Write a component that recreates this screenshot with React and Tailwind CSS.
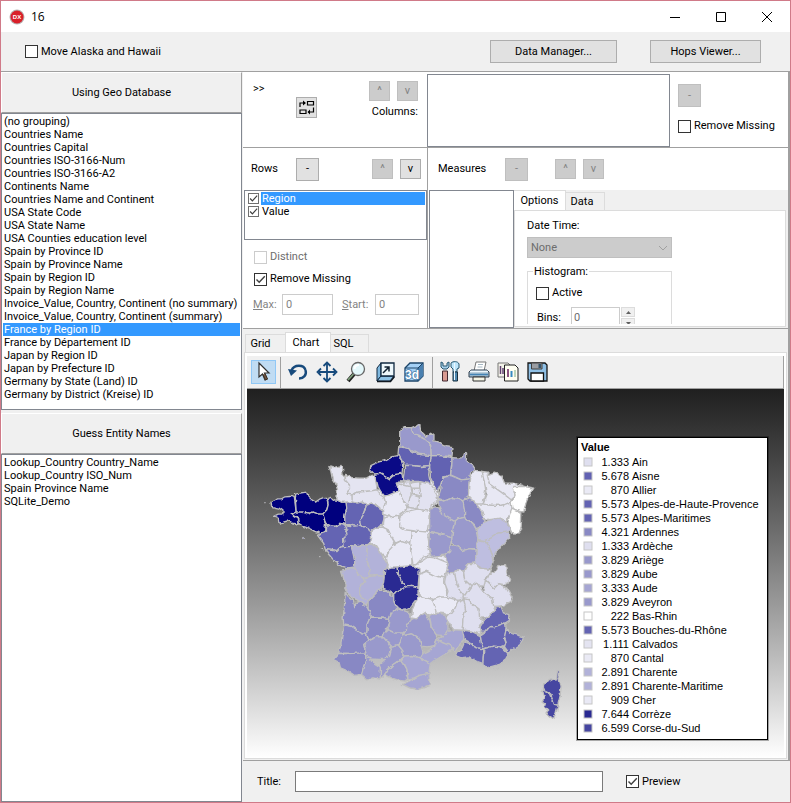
import React from "react";

const DATABASES = [
  "(no grouping)", "Countries Name", "Countries Capital", "Countries ISO-3166-Num", "Countries ISO-3166-A2",
  "Continents Name", "Countries Name and Continent", "USA State Code", "USA State Name",
  "USA Counties education level", "Spain by Province ID", "Spain by Province Name", "Spain by Region ID",
  "Spain by Region Name", "Invoice_Value, Country, Continent (no summary)",
  "Invoice_Value, Country, Continent (summary)", "France by Region ID", "France by Département ID",
  "Japan by Region ID", "Japan by Prefecture ID", "Germany by State (Land) ID", "Germany by District (Kreise) ID",
];
const ENTITIES = ["Lookup_Country Country_Name", "Lookup_Country ISO_Num", "Spain Province Name", "SQLite_Demo"];

const LEGEND = [
  ["#dfdfef", "1.333", "Ain"], ["#6161b2", "5.678", "Aisne"], ["#eaeaf5", "870", "Allier"],
  ["#6464b3", "5.573", "Alpes-de-Haute-Provence"], ["#6464b3", "5.573", "Alpes-Maritimes"],
  ["#8989c4", "4.321", "Ardennes"], ["#dfdfef", "1.333", "Ardèche"], ["#9999cc", "3.829", "Ariège"],
  ["#9999cc", "3.829", "Aube"], ["#a6a6d3", "3.333", "Aude"], ["#9999cc", "3.829", "Aveyron"],
  ["#ffffff", "222", "Bas-Rhin"], ["#6464b3", "5.573", "Bouches-du-Rhône"], ["#e4e4f1", "1.111", "Calvados"],
  ["#eaeaf5", "870", "Cantal"], ["#b2b2d9", "2.891", "Charente"], ["#b2b2d9", "2.891", "Charente-Maritime"],
  ["#e9e9f5", "909", "Cher"], ["#2a2a92", "7.644", "Corrèze"], ["#4646a1", "6.599", "Corse-du-Sud"],
];

// Departments, three units to a pixel, grouped by the corner of the country they are measured from.
const NORTH_WEST = [
  ["#00007e", [
    "48,262 60,258 68,252 80,252 90,246 105,245 118,248 120,262 124,292 112,297 116,302 126,308 130,328 115,325 100,318 85,322 72,325 70,312 56,305 70,298 84,298 84,288 72,280 60,278 50,275",
    "122,238 140,234 155,232 160,245 172,256 182,262 196,252 208,248 216,255 220,270 216,285 204,298 190,298 175,292 160,298 140,292 124,292 122,262",
    "112,297 124,292 140,292 160,298 175,292 190,298 204,298 208,310 212,330 208,352 195,355 180,350 165,342 145,335 130,325 128,308",
    "218,252 228,248 240,256 246,255 262,262 274,262 276,280 270,300 270,330 255,326 240,335 225,332 212,328 208,310 204,298 216,285 220,270"]],
  ["#e4e4f1", [
    "222,155 236,160 244,156 262,152 264,170 260,178 270,185 272,196 284,210 284,222 276,230 278,238 292,240 294,262 274,262 260,262 246,255 248,225 242,205 232,190 228,170",
    "272,182 290,188 310,190 335,190 348,182 360,180 362,195 366,215 366,225 350,228 330,230 310,232 292,240 278,238 276,230 284,222 284,210 272,196",
    "292,240 310,232 330,230 350,228 366,225 376,240 388,248 392,260 388,275 386,290 372,280 358,268 350,265 335,272 322,262 308,265 292,262"]],
  ["#0a0a86", [
    "346,165 348,152 370,142 395,135 415,125 428,122 440,135 444,155 442,175 430,178 415,180 402,192 390,185 375,176 360,178",
    "360,178 375,176 390,185 402,192 415,180 442,176 444,192 436,200 434,212 428,230 410,238 390,244 378,230 370,215 366,200"]],
  ["#6464b3", [
    "274,262 292,262 308,265 322,262 335,272 330,285 325,302 315,318 318,332 300,334 285,330 270,330 270,300 276,280",
    "335,272 350,265 358,268 372,280 386,290 388,312 382,330 366,338 350,348 335,340 318,332 315,318 325,302 330,285",
    "188,362 200,354 212,350 212,330 225,332 240,335 255,326 270,330 276,340 270,350 280,358 266,372 268,396 256,398 246,408 230,404 212,402 206,385 198,375",
    "270,330 300,334 318,332 335,340 350,348 350,365 345,385 338,390 310,392 290,396 268,396 266,372 280,358 270,350 276,340",
    "210,402 230,404 246,408 256,398 268,396 290,396 297,420 300,440 299,457 280,460 260,455 240,440 220,417"]],
  ["#e9e9f5", [
    "390,244 410,238 428,230 434,212 440,225 455,245 460,265 455,285 435,300 410,305 388,300 386,285 392,262 388,248",
    "388,310 410,305 435,302 445,325 470,340 480,360 475,380 465,385 440,378 422,385 410,365 400,345 385,338",
    "350,348 366,338 385,338 400,345 412,370 420,385 415,400 400,410 395,430 378,415 365,395 345,385",
    "420,388 440,378 465,385 470,410 472,440 470,455 440,460 400,462 395,430 402,408"]],
];
const NORTH_EAST = [
  ["#e9e9f5", [
    "15,305 38,290 70,282 105,290 102,320 98,350 75,352 55,348 30,345 15,335",
    "50,350 75,350 98,352 102,380 108,420 85,425 70,445 55,450 50,420 45,385"]],
  ["#e2e2f0", [
    "5,205 40,200 75,200 108,208 120,225 130,255 110,270 105,290 70,282 38,278 18,240",
    "5,205 45,215 50,235 38,278 18,240",
    "50,235 75,245 70,282 38,278",
    "50,220 75,220 80,245 50,235",
    "45,205 75,200 75,220 50,220"]],
  ["#6262b2", [
    "12,95 40,100 70,118 110,122 105,152 80,155 50,152 30,152 22,138 10,118",
    "30,152 50,152 80,155 105,152 102,180 108,208 75,200 40,200 25,195 28,175",
    "110,122 140,122 172,128 172,145 168,180 145,188 138,210 130,230 118,210 108,190 105,155"]],
  ["#9999cc", [
    "15,45 30,38 50,38 55,55 75,65 95,75 108,90 110,122 70,118 40,100 15,92",
    "50,38 75,28 78,48 95,65 108,55 118,62 118,78 140,85 155,95 175,98 172,125 140,122 110,122 108,90 95,75 75,65 55,55",
    "130,256 150,258 175,248 190,250 205,258 210,280 210,308 190,312 180,320 165,312 145,300 135,280",
    "105,280 130,275 145,300 165,312 180,320 175,345 172,370 140,358 105,350 105,310",
    "105,350 140,358 172,370 168,392 165,420 140,422 108,425 102,390",
    "180,320 190,312 210,308 235,325 245,345 250,375 245,402 225,402 205,408 185,395 170,385 172,370 175,345",
    "150,420 165,408 168,392 185,395 205,408 225,402 245,405 243,445 220,447 205,470 190,465 178,475 155,475 160,445"]],
  ["#8989c4", [
    "172,128 195,130 205,128 212,110 216,115 215,140 235,152 240,160 228,172 225,192 200,195 180,185 168,180 172,145",
    "145,188 168,182 200,195 225,192 222,225 222,245 205,258 190,250 175,248 150,258 130,250 138,225 140,210",
    "205,258 222,250 240,262 258,275 262,300 272,318 262,335 245,342 235,325 210,308 210,285"]],
  ["#bebee0", [
    "248,345 265,325 285,315 315,310 335,322 350,345 340,352 310,355 290,370 270,378 250,375",
    "270,378 290,370 310,355 345,352 345,368 325,390 305,415 298,432 285,400",
    "250,376 270,378 285,400 298,432 292,455 270,465 243,450 245,405"]],
  ["#e8e8f4", [
    "240,165 262,170 270,185 275,215 270,245 265,268 245,268 222,245 222,225 225,190",
    "262,170 280,172 285,208 310,220 345,245 352,262 320,272 290,272 265,268 275,240 272,215",
    "278,180 300,172 322,185 330,205 355,205 385,212 375,225 358,218 362,245 350,255 320,232 285,208",
    "245,268 265,268 290,272 320,272 352,262 355,280 345,300 335,322 315,310 285,315 268,310 262,290"]],
  ["#ffffff", [
    "355,215 390,215 418,220 405,240 395,262 388,292 370,288 352,280 350,262 362,245",
    "352,280 370,288 382,295 380,340 372,358 355,358 340,325 345,300"]],
];
const SOUTH_WEST = [
  ["#b2b2d9", [
    "95,-9 120,-13 143,-15 140,30 150,60 150,80 130,85 115,75 104,54 105,35",
    "143,-15 155,-17 170,-5 183,10 205,48 195,60 192,80 170,78 150,80 150,60 140,30",
    "62,65 75,62 80,55 104,54 115,75 130,85 135,95 120,115 120,135 135,150 145,155 138,168 120,155 100,145 85,130 75,110 78,95 68,85",
    "130,85 150,80 170,78 192,80 190,105 178,122 160,140 145,155 135,150 120,135 120,115 135,95"]],
  ["#8888c4", [
    "76,128 85,140 100,152 106,175 108,158 120,155 138,168 145,178 152,190 150,208 142,225 142,240 140,255 125,252 110,240 95,230 72,228 70,205 74,170",
    "145,155 160,140 178,122 195,122 215,135 225,145 228,165 232,178 215,192 208,210 190,206 170,205 150,206 152,190 145,178",
    "72,226 95,230 110,240 125,252 140,255 148,272 132,285 138,310 110,314 80,312 56,312 64,280 68,250",
    "142,225 150,206 190,206 208,210 205,228 195,248 190,262 170,262 148,272 140,255 142,240",
    "40,330 56,312 80,312 138,310 138,335 132,350 125,375 105,378 85,365 62,355 58,340 50,335"]],
  ["#9999cc", [
    "138,310 145,325 155,330 165,345 182,355 182,388 160,385 140,388 125,375 132,350 138,335",
    "132,285 148,272 170,262 190,262 205,280 215,300 210,320 195,330 175,330 155,328 145,325 138,310",
    "210,320 215,300 212,290 235,285 250,305 250,320 235,335 220,345 205,360 195,375 182,388 182,355 178,345 195,330",
    "195,248 205,240 225,250 250,248 248,265 235,285 215,290 205,278 190,262",
    "208,210 215,192 232,178 250,182 272,190 275,210 262,228 260,240 250,250 225,250 205,240 205,228",
    "248,258 275,252 300,270 305,290 310,308 300,325 275,318 250,320 250,305 235,285 240,275",
    "195,375 205,360 220,345 235,335 248,335 262,360 260,380 265,388 255,395 235,392 215,385",
    "260,240 262,228 275,210 295,200 318,190 330,210 335,235 350,255 352,270 345,288 325,292 305,290 300,270 275,252 250,258"]],
  ["#a6a6d3", [
    "330,200 350,190 375,195 385,215 385,245 370,258 350,255 335,235",
    "352,270 370,258 385,245 410,240 430,240 435,260 430,275 415,290 405,310 395,290 370,280",
    "300,325 310,312 325,305 345,290 352,270 370,280 395,290 398,298 375,315 350,330 335,342 320,335",
    "250,320 275,318 300,325 320,335 332,342 328,372 300,378 285,385 265,388 262,360 255,345 246,335",
    "248,405 268,395 285,385 300,378 328,372 332,408 310,415 295,420 270,415"]],
  ["#eaeaf5", [
    "280,48 305,35 325,22 350,25 385,40 382,60 375,85 345,78 320,65 298,72",
    "298,75 320,65 345,78 375,85 380,110 382,142 360,145 340,150 320,145 295,138 298,105",
    "275,205 278,180 295,140 320,145 340,150 348,175 350,190 330,200 318,188 300,200 290,208",
    "340,150 365,142 410,145 418,160 400,180 385,200 375,192 350,190 345,170"]],
  ["#2a2a92", [
    "195,60 215,52 232,52 235,70 245,95 258,112 240,122 222,132 205,122 188,115 192,95",
    "232,52 275,48 298,60 298,80 295,112 275,110 258,112 245,95 235,70",
    "222,132 240,122 258,112 275,110 295,115 295,140 285,155 270,175 252,182 230,172 222,155"]],
];
const SOUTH_EAST = [
  ["#dfdfef", [
    "50,70 75,68 80,95 88,118 105,138 103,148 85,152 50,142 55,125 45,100",
    "75,68 85,60 102,65 105,90 125,108 105,138 88,118 80,95",
    "102,65 115,42 138,42 150,55 185,60 182,72 168,85 168,112 150,112 140,98 125,108 105,90",
    "182,75 195,68 205,48 228,45 232,70 242,95 225,105 208,102 195,115 170,90",
    "168,90 195,115 208,102 232,115 248,145 245,155 220,168 192,172 188,145 160,125 165,105",
    "105,138 125,108 140,98 160,125 188,145 192,172 198,185 170,205 150,205 148,178 130,165 118,150 103,148",
    "50,205 75,175 85,155 103,148 108,180 100,210 98,242 72,240",
    "103,148 118,150 130,165 148,178 150,205 160,212 148,235 155,255 125,245 98,242 100,210 108,180"]],
  ["#6464b3", [
    "150,235 165,210 198,185 195,170 215,172 222,190 238,195 240,212 228,220 195,232 180,230 170,245 155,245",
    "152,258 170,245 180,232 195,232 228,220 230,240 225,265 232,285 215,292 190,290 163,298 155,280",
    "230,238 245,252 282,262 272,285 250,300 240,312 225,292 230,275 225,262",
    "98,242 125,245 152,258 155,280 163,298 140,295 120,282 105,275",
    "75,318 98,295 105,277 120,282 140,295 163,298 160,342 140,335 118,322 95,325",
    "163,298 190,290 215,292 235,312 230,330 210,345 170,355 160,342"]],
  ["#4646a1", [
    "342,405 370,390 382,388 384,362 390,365 388,385 395,410 392,440 385,468 375,465 365,435 342,420",
    "338,425 360,430 375,465 386,468 380,490 372,508 350,492 358,485 345,472 348,462 338,455 345,442"]],
];

function Shapes({ regions, transform }) {
  return (
    <g transform={transform}>
      {regions.map(([fill, shapes], i) => (
        <g key={i} fill={fill}>{shapes.map((p) => <polygon key={p} points={p} />)}</g>
      ))}
    </g>
  );
}

function FranceMap() {
  return (
    <svg viewBox="0 0 538 369" className="block w-full" role="img" aria-label="France by region">
      <defs>
        <filter id="coast" x="0" y="0" width="100%" height="100%" colorInterpolationFilters="sRGB">
          <feTurbulence type="fractalNoise" baseFrequency="0.18" numOctaves="2" seed="4" result="n" />
          <feDisplacementMap in="SourceGraphic" in2="n" scale="4" xChannelSelector="R" yChannelSelector="G" />
        </filter>
      </defs>
      <g filter="url(#coast)">
        <g transform="translate(8 26) scale(0.333333)" stroke="#bebebe" strokeWidth="4" strokeLinejoin="round">
          <polygon fill="#e9e9f5" points="366,225 430,225 440,200 530,195 560,250 530,280 530,420 590,430 590,480 640,560 580,590 480,560 480,500 470,455 400,460 350,390 350,345 388,330" />
          <Shapes regions={NORTH_WEST} />
          <Shapes regions={NORTH_EAST} transform="translate(420 0)" />
          <Shapes regions={SOUTH_WEST} transform="translate(195 405)" />
          <Shapes regions={SOUTH_EAST} transform="translate(525 405)" />
          <g fill="#6464b3" strokeWidth="3">
            <circle cx="30" cy="267" r="1" /><circle cx="146" cy="370" r="3" />
            <path d="M193,426h7M198,402l8,4M257,472l8,4M268,490l5,14M715,762l8,4M728,765l6,-4" />
          </g>
        </g>
      </g>
    </svg>
  );
}

function Check({ label, checked = false, disabled = false, small = false, tone = "text-black" }) {
  return (
    <label className={"flex items-center gap-[3px] whitespace-nowrap " + tone}>
      <span className="grid shrink-0">
        <input
          type="checkbox"
          defaultChecked={checked}
          disabled={disabled}
          className={"peer col-start-1 row-start-1 m-0 appearance-none border bg-white " +
            (small ? "size-[11px] border-[#707070]" : disabled ? "size-[13px] border-[#cccccc]" : "size-[13px] border-[#333333]")}
        />
        <svg viewBox="0 0 13 13" className={"pointer-events-none invisible col-start-1 row-start-1 peer-checked:visible " + (small ? "size-[11px]" : "size-[13px]")} fill="none" stroke="#404040" strokeWidth="1.4">
          <path d="M2.5 6.5L5.2 9.3L10.8 3.2" />
        </svg>
      </span>
      {label}
    </label>
  );
}

function Btn({ children, disabled = false, className = "", label }) {
  return (
    <button
      type="button"
      disabled={disabled}
      aria-label={label}
      className={"grid shrink-0 place-items-center border " +
        (disabled ? "border-[#bfbfbf] bg-[#cccccc] text-[#838383] " : "border-[#adadad] bg-[#e1e1e1] text-black ") + className}
    >
      {children}
    </button>
  );
}

function PanelButton({ children }) {
  return (
    <button type="button" className="h-[41px] shrink-0 border border-t-white border-l-white border-r-[#a0a0a0] border-b-[#a0a0a0] bg-[#f0f0f0] text-center">
      {children}
    </button>
  );
}

function List({ items, selected, className }) {
  return (
    <ul className={"border border-[#828790] bg-white p-px leading-[13px] whitespace-nowrap " + className}>
      {items.map((t) => (
        <li key={t} className={t === selected ? "bg-[#3399ff] px-px text-white" : "px-px"}>{t}</li>
      ))}
    </ul>
  );
}

function Tool({ label, active = false, children }) {
  return (
    <button type="button" aria-label={label} className={"grid h-6 w-[25px] shrink-0 place-items-center border " + (active ? "border-[#90c8f6] bg-[#c0dcf3]" : "border-transparent")}>
      <svg viewBox="0 0 22 22" className="size-[22px]" fill="none">{children}</svg>
    </button>
  );
}

function Toolbar() {
  return (
    <div className="flex h-[33px] shrink-0 items-center gap-1 border-r border-b border-[#a0a0a0] bg-[#f0f0f0] pl-1">
      <Tool label="Select" active>
        <path d="M6 2L6 16L9.5 13L12 19L14 18L11.5 12H16Z" fill="#fff" stroke="#303030" strokeWidth="1.2" />
        <path d="M10 13.5L12.5 19L14.5 18L12 12.5" fill="#705848" stroke="#403020" />
      </Tool>
      <span className="h-[31px] w-px bg-[#a0a0a0]" />
      <Tool label="Rotate">
        <path d="M4.5 9.5C7 3 17 3.500 18.500 9C20 14 16.500 17.500 12 17.500" stroke="#174a7c" strokeWidth="2.4" />
        <path d="M1 8L10 9.500L4 15Z" fill="#174a7c" />
      </Tool>
      <Tool label="Move">
        <path d="M11 3V19M3 11H19" stroke="#174a7c" strokeWidth="1.8" />
        <path d="M7.500 5L11 1.500L14.500 5M7.500 17L11 20.500L14.500 17M5 7.500L1.500 11L5 14.500M17 7.500L20.500 11L17 14.500" stroke="#174a7c" strokeWidth="1.8" />
      </Tool>
      <Tool label="Zoom">
        <path d="M9 13L3 20" stroke="#202020" strokeWidth="4" />
        <path d="M8.500 13L3 19" stroke="#7fa17c" strokeWidth="1.800" />
        <circle cx="13" cy="8" r="6.500" fill="#e4f8fb" stroke="#666" strokeWidth="1.300" />
        <path d="M9.500 8C9.500 5 12 4 14 4" stroke="#fff" strokeWidth="2" />
      </Tool>
      <Tool label="Depth">
        <path d="M3 7L7 2V15L3 20Z" fill="#7fb8df" stroke="#102840" />
        <path d="M3 20L7 15H20L16 20Z" fill="#8fc4e8" stroke="#102840" />
        <path d="M7 2H20V15H7Z" fill="#eef8fc" stroke="#102840" strokeWidth="1.300" />
        <path d="M3 20.500H16.500L20.500 15.500" stroke="#101820" strokeWidth="1.500" />
        <path d="M9 12L14.500 6.500M10.500 6H15V10.500" stroke="#102030" strokeWidth="1.500" />
      </Tool>
      <Tool label="3D view">
        <path d="M2 7L7 2H20V15L15 20H2Z" fill="#a4d0f5" stroke="#1c4468" strokeWidth="1.300" />
        <path d="M15 7L20 2V15L15 20Z" fill="#4a80b0" />
        <path d="M2 7H15V20M15 7L20 2" stroke="#1c4468" />
        <text x="2" y="18" fontSize="12" fontWeight="bold" fontFamily="Liberation Sans, sans-serif" fill="#fff" stroke="#3f76a6" strokeWidth="1.500" paintOrder="stroke">3d</text>
      </Tool>
      <span className="ml-[2px] h-[31px] w-px bg-[#a0a0a0]" />
      <Tool label="Edit chart">
        <path d="M2 1V6L4 8H8L10 6V1L8 2V5H4V2Z" fill="#a5cee8" stroke="#285870" />
        <path d="M3.500 10H8.500V20H3.500Z" fill="#d99a91" stroke="#402830" />
        <path d="M12 2C14 0 19 0 20 3V7L18 8V11H14V8L12 6Z" fill="#bce5fa" stroke="#285870" />
        <path d="M14 11H18.500V20H14Z" fill="#4d88b0" stroke="#193040" />
        <path d="M15.500 2V19" stroke="#eef9ff" />
      </Tool>
      <Tool label="Print">
        <path d="M6 10L8 1H18L16 10Z" fill="#fff" stroke="#777" />
        <path d="M10 3.500H15M9.500 6H14.500" stroke="#a6b8c4" />
        <path d="M3 9H19L21 11V16H1V11Z" fill="#a8c1d1" stroke="#304050" />
        <path d="M2 10.500H20" stroke="#edf7fc" strokeWidth="1.500" />
        <path d="M2 13.500H20" stroke="#4484b5" strokeWidth="1.500" />
        <path d="M5 16H17V20H5Z" fill="#f4f5e6" stroke="#303030" />
      </Tool>
      <Tool label="Copy">
        <path d="M1 2H11L13 4V16H1Z" fill="#f3f3e9" stroke="#777" />
        <path d="M3.500 5V13M6 7V13" stroke="#604070" strokeWidth="1.500" />
        <path d="M7.500 4H18L21 7V20H7.500Z" fill="#fffff2" stroke="#222" />
        <path d="M11 8V16" stroke="#8b5582" strokeWidth="2" /><path d="M14.500 10V16" stroke="#368bc3" strokeWidth="2" /><path d="M18 9V16" stroke="#a8c8a8" strokeWidth="1.500" />
      </Tool>
      <Tool label="Save">
        <path d="M2 2H19L21 4V20H4L2 18Z" fill="#8fc0e6" stroke="#151515" strokeWidth="1.300" />
        <path d="M5.500 2H16V8H5.500Z" fill="#9a9da2" stroke="#404040" />
        <path d="M12.500 3H15V7H12.500Z" fill="#34536a" />
        <path d="M5 12H17.500V20H5Z" fill="#fff" stroke="#101010" strokeWidth="1.300" />
      </Tool>
    </div>
  );
}

function Legend() {
  return (
    <div className="absolute top-[48px] right-[16px] w-[191px] border border-black bg-white px-[3px] pt-[2px] pb-1 font-['Liberation_Sans',Arial,sans-serif] text-[11px] leading-[14px] outline outline-black/30">
      <h2 className="mb-px font-bold">Value</h2>
      <ul>
        {LEGEND.map(([color, value, name]) => (
          <li key={name} className="grid grid-cols-[10px_33px_1fr] items-center gap-x-[3px] pl-[2px] whitespace-nowrap">
            <svg viewBox="0 0 10 10" className="size-[10px]"><rect x="1" y="1" width="8" height="8" fill={color} stroke="#c6c6c6" strokeWidth="1" /></svg>
            <span className="text-right">{value}</span>
            <span>{name}</span>
          </li>
        ))}
      </ul>
    </div>
  );
}

function TopPanel() {
  return (
    <section className="flex h-[76px] shrink-0 border-b border-[#a0a0a0] bg-white">
      <div className="flex w-[184px] shrink-0 justify-between pr-[9px] pl-[10px]">
        <div className="flex gap-[27px]">
          <span className="w-4 pt-[10px]">&gt;&gt;</span>
          <Btn label="Swap rows and columns" className="mt-[25px] size-[21px]">
            <svg viewBox="0 0 17 17" className="size-[17px]" fill="none" stroke="#000" strokeWidth="1.200">
              <path d="M9.500 2.500H15.500V6H9.500ZM2 11H8V14.500H2ZM2 8V4H6.500M15.500 8.500V13H10.500" />
              <path d="M5 1.500V6.500L8 4ZM12 10.500V15.500L9.500 13Z" fill="#000" stroke="none" />
            </svg>
          </Btn>
        </div>
        <div className="pt-[9px]">
          <div className="flex gap-[7px]">
            <Btn disabled label="Column up" className="h-5 w-[21px]">^</Btn>
            <Btn disabled label="Column down" className="h-5 w-[21px]">v</Btn>
          </div>
          <div className="mt-1 text-right">Columns:</div>
        </div>
      </div>
      <div className="mt-[2px] flex-1 border border-[#828790]" />
      <div className="flex w-[118px] shrink-0 flex-col gap-3 pt-3 pl-2">
        <Btn disabled label="Remove column" className="size-[23px]">-</Btn>
        <Check label="Remove Missing" />
      </div>
    </section>
  );
}

function RowsPanel() {
  return (
    <section className="flex w-[185px] shrink-0 flex-col border-r border-[#a0a0a0] bg-white">
      <div className="flex h-[42px] items-center pr-[6px] pl-2">
        <span className="w-[45px]">Rows</span>
        <Btn label="Remove row" className="size-[23px]">-</Btn>
        <div className="ml-auto flex gap-[7px]">
          <Btn disabled label="Row up" className="h-5 w-[21px]">^</Btn>
          <Btn label="Row down" className="h-5 w-[21px]">v</Btn>
        </div>
      </div>
      <ul className="ml-px h-[50px] border border-[#828790] p-px leading-[13px]">
        <li className="grid grid-cols-[13px_1fr] pl-[2px]">
          <Check small checked /><span className="bg-[#3399ff] pl-px text-white">Region</span>
        </li>
        <li className="grid grid-cols-[13px_1fr] pl-[2px]">
          <Check small checked /><span className="pl-px">Value</span>
        </li>
      </ul>
      <div className="flex flex-col gap-2 pt-[10px] pl-[11px]">
        <Check label="Distinct" disabled tone="text-[#6d6d6d]" />
        <Check label="Remove Missing" checked />
      </div>
      <div className="flex items-center pt-2 pl-[10px] text-[#838383]">
        <label htmlFor="max" className="w-[29px]"><u>M</u>ax:</label>
        <input id="max" disabled defaultValue="0" className="h-[21px] w-[51px] border border-[#cccccc] px-[3px]" />
        <label htmlFor="start" className="w-[42px] pl-[9px]"><u>S</u>tart:</label>
        <input id="start" disabled defaultValue="0" className="h-[21px] w-[44px] border border-[#cccccc] px-[3px]" />
      </div>
    </section>
  );
}

function OptionsPanel() {
  return (
    <div className="flex min-w-0 flex-1 flex-col bg-[#f0f0f0] pr-[2px]">
      <div className="flex h-5 shrink-0 items-end" role="tablist">
        <button type="button" role="tab" aria-selected="true" className="h-5 w-[52px] border-t border-r border-[#dcdcdc] bg-white">Options</button>
        <button type="button" role="tab" aria-selected="false" className="h-[18px] w-[39px] border-t border-r border-[#dcdcdc] pr-[6px]">Data</button>
      </div>
      <div className="mb-px flex h-[117px] flex-col border border-[#dcdcdc] bg-white pb-[2px]">
        <div className="flex flex-1 flex-col items-start overflow-hidden pt-2 pl-3">
          <label htmlFor="datetime" className="leading-[13px]">Date Time:</label>
          <span className="mt-[5px] grid shrink-0">
            <select id="datetime" disabled className="col-start-1 row-start-1 h-[21px] w-[145px] appearance-none border border-[#bfbfbf] bg-[#cccccc] px-[3px] text-[#6d6d6d] opacity-100">
              <option>None</option>
            </select>
            <svg viewBox="0 0 10 6" className="pointer-events-none col-start-1 row-start-1 mr-1 h-[6px] w-[10px] self-center justify-self-end" fill="none" stroke="#a0a0a0"><path d="M1 1L5 5L9 1" /></svg>
          </span>
          <fieldset className="mt-[7px] h-[80px] w-[145px] shrink-0 border border-[#dcdcdc] pl-2">
            <legend className="-ml-[3px] px-px leading-[13px]">Histogram:</legend>
            <div className="pt-2"><Check label="Active" /></div>
            <div className="flex items-center pt-[7px]">
              <label htmlFor="bins" className="w-[35px] pl-px">Bins:</label>
              <input id="bins" defaultValue="0" className="h-[21px] w-[49px] border border-[#cccccc] px-[2px] text-[#6d6d6d]" />
              <span className="flex flex-col gap-px pl-px">
                <Btn label="More bins" className="h-[10px] w-[14px] border-[#dcdcdc] bg-[#f0f0f0]"><svg viewBox="0 0 5 3" className="h-[3px] w-[5px]"><path d="M0 3L2.500 0L5 3Z" fill="#606060" /></svg></Btn>
                <Btn label="Fewer bins" className="h-[10px] w-[14px] border-[#dcdcdc] bg-[#f0f0f0]"><svg viewBox="0 0 5 3" className="h-[3px] w-[5px]"><path d="M0 0L2.500 3L5 0Z" fill="#606060" /></svg></Btn>
              </span>
            </div>
          </fieldset>
        </div>
      </div>
    </div>
  );
}

function MeasuresPanel() {
  return (
    <section className="flex min-w-0 flex-1 flex-col bg-white">
      <div className="flex h-[42px] shrink-0 items-center pl-[10px]">
        <span className="w-[67px]">Measures</span>
        <Btn disabled label="Remove measure" className="size-[23px]">-</Btn>
        <div className="ml-[27px] flex gap-[7px]">
          <Btn disabled label="Measure up" className="h-5 w-[21px]">^</Btn>
          <Btn disabled label="Measure down" className="h-5 w-[21px]">v</Btn>
        </div>
      </div>
      <div className="flex flex-1">
        <div className="ml-px w-[85px] shrink-0 border border-[#828790]" />
        <OptionsPanel />
      </div>
    </section>
  );
}

export default function App() {
  return (
    <div className="flex min-h-screen flex-col border border-[#d07a88] bg-[#f0f0f0] font-['Roboto','Noto_Sans',sans-serif] text-[11px] leading-[14px] text-black">
      <header className="flex h-[31px] shrink-0 items-center bg-white pl-2">
        <svg viewBox="0 0 16 16" className="size-4">
          <circle cx="8" cy="8" r="7.500" fill="#b8b4b4" /><circle cx="8" cy="8" r="6.500" fill="#d9202a" />
          <text x="8" y="10" textAnchor="middle" fontSize="6" fontWeight="bold" fontFamily="Liberation Sans, sans-serif" fill="#fff">DX</text>
        </svg>
        <h1 className="pl-[6px] font-['Open_Sans',sans-serif] text-[12px]">16</h1>
        <div className="ml-auto flex">
          {[["Minimize", "M0 5.500H10"], ["Maximize", "M.5 .5H9.500V9.500H.5Z"], ["Close", "M0 0L10 10M10 0L0 10"]].map(([n, d]) => (
            <button key={n} type="button" aria-label={n} className="grid h-[30px] w-[46px] place-items-center">
              <svg viewBox="0 0 10 10" className="size-[10px] overflow-visible" fill="none" stroke="#000"><path d={d} /></svg>
            </button>
          ))}
        </div>
      </header>

      <div className="flex h-10 shrink-0 items-center border-b border-[#a0a0a0] pr-[29px] pl-6">
        <Check label="Move Alaska and Hawaii" />
        <Btn className="ml-auto h-[23px] w-[127px]">Data Manager...</Btn>
        <Btn className="ml-[33px] h-[23px] w-[111px]">Hops Viewer...</Btn>
      </div>

      <div className="flex flex-1">
        <aside className="flex w-[241px] shrink-0 flex-col">
          <PanelButton>Using Geo Database</PanelButton>
          <List items={DATABASES} selected="France by Region ID" className="mb-[3px] h-[297px] shrink-0" />
          <PanelButton>Guess Entity Names</PanelButton>
          <List items={ENTITIES} className="flex-1" />
        </aside>

        <main className="flex min-w-0 flex-1 flex-col pl-px">
          <div className="flex flex-1 flex-col border-r-2 border-[#a0a0a0]">
            <TopPanel />
            <div className="flex h-[181px] shrink-0 border-b border-[#a0a0a0]">
              <RowsPanel />
              <MeasuresPanel />
            </div>
            <section className="flex flex-1 flex-col px-px pt-[3px] pb-px">
              <div className="flex h-5 shrink-0 items-end pl-px" role="tablist">
                <button type="button" role="tab" aria-selected="false" className="h-[18px] w-10 border-t border-l border-[#dcdcdc] pr-[10px]">Grid</button>
                <button type="button" role="tab" aria-selected="true" className="h-5 w-[46px] border-x border-t border-[#dcdcdc] bg-white pr-1">Chart</button>
                <button type="button" role="tab" aria-selected="false" className="h-[18px] w-[38px] border-t border-r border-[#dcdcdc] pr-3">SQL</button>
              </div>
              <div className="flex flex-1 flex-col border border-[#dcdcdc] bg-white px-[2px] pt-[3px]">
                <Toolbar />
                <div className="relative flex-1 bg-linear-to-b from-[#202020] to-white">
                  <FranceMap />
                  <Legend />
                </div>
              </div>
            </section>
          </div>
          <footer className="flex h-[42px] shrink-0 items-center border-t border-[#a0a0a0] pl-[14px]">
            <label htmlFor="title" className="w-[38px]">Title:</label>
            <input id="title" className="h-[21px] min-w-0 flex-1 border border-[#7a7a7a] bg-white px-1" />
            <div className="w-[187px] shrink-0 pl-[23px]"><Check label="Preview" checked /></div>
          </footer>
        </main>
      </div>
    </div>
  );
}
